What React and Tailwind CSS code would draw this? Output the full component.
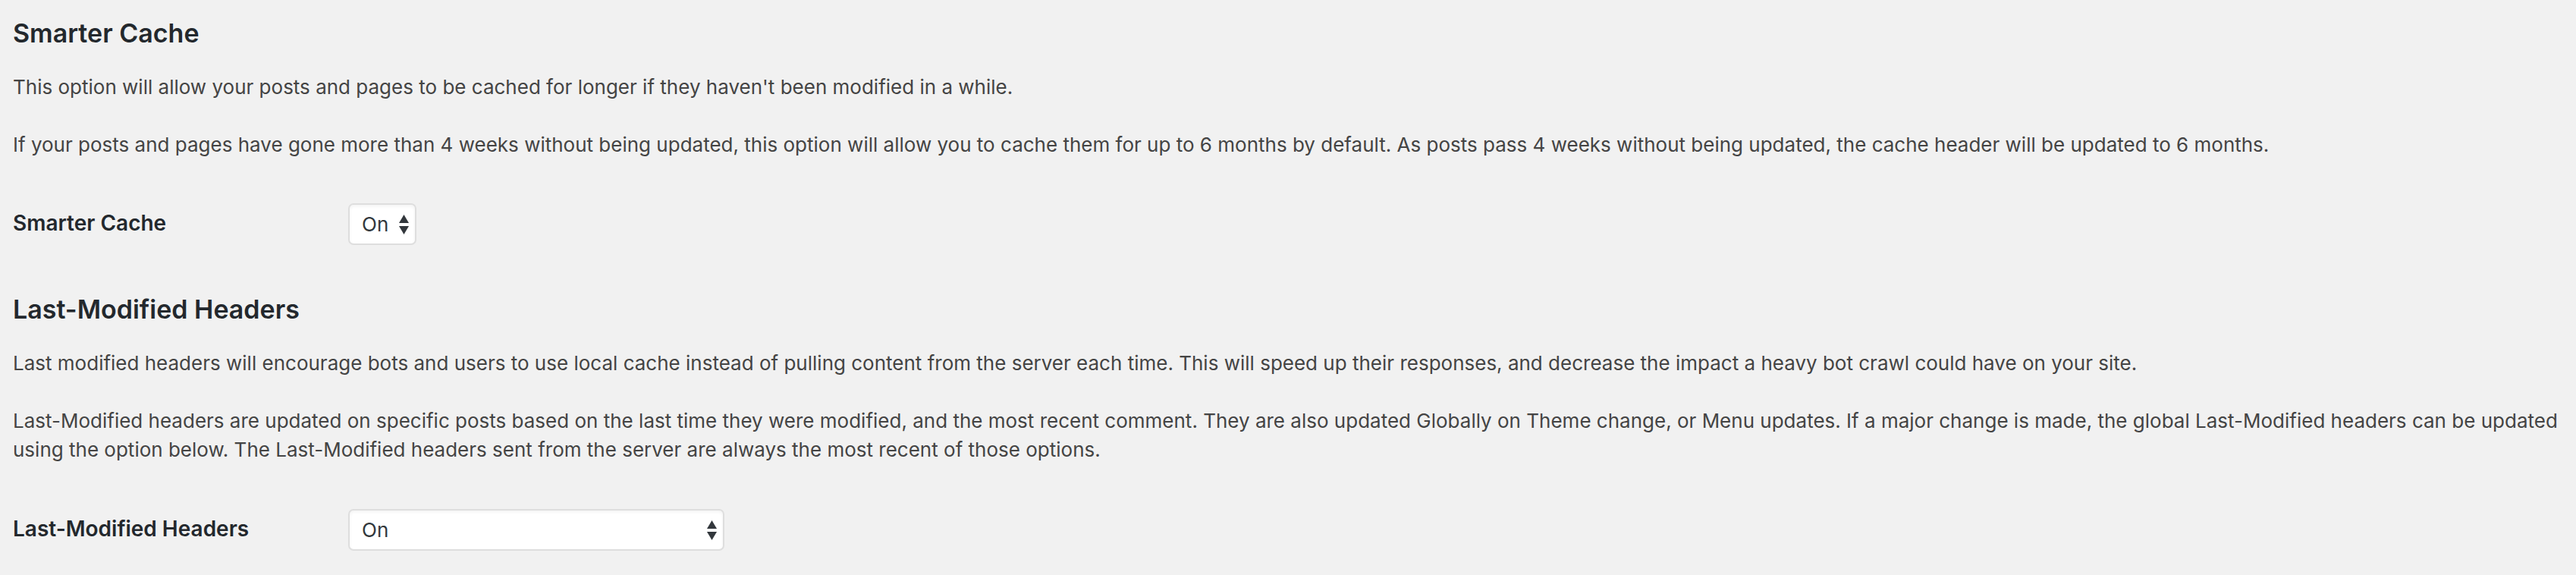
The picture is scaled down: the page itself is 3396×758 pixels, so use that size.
import { useState } from 'react';

const SelectArrows = () => (
  <svg className="pointer-events-none absolute right-[10px] top-1/2 -translate-y-1/2" width="13" height="26" viewBox="0 0 13 26">
    <path d="M6.5 0 L13 11 L0 11 Z" fill="#32373c" />
    <path d="M0 15 L13 15 L6.5 26 Z" fill="#32373c" />
  </svg>
);

const OptionSelect = ({ value, onChange, width }) => (
  <div className={`relative h-[55px] ${width}`}>
    <select
      value={value}
      onChange={(e) => onChange(e.target.value)}
      className="h-full w-full appearance-none rounded-[7px] border-2 border-[#dedede] bg-white pl-[16px] pr-[30px] text-[26px] leading-none text-[#32373c] shadow-[inset_0_2px_4px_rgba(0,0,0,0.05)] outline-none"
    >
      <option value="on">On</option>
      <option value="off">Off</option>
    </select>
    <SelectArrows />
  </div>
);

const SettingRow = ({ label, value, onChange, width }) => (
  <div className="flex items-start">
    <label className="mt-[7px] w-[442px] shrink-0 text-[28px] font-semibold leading-[38px] text-[#23282d]">{label}</label>
    <OptionSelect value={value} onChange={onChange} width={width} />
  </div>
);

export default function App() {
  const [smarterCache, setSmarterCache] = useState('on');
  const [lastModified, setLastModified] = useState('on');

  return (
    <div className="min-h-screen bg-[#f1f1f1] pl-[17px] pr-[20px] font-['Inter',sans-serif]">
      <h2 className="pt-[24px] text-[34px] font-semibold leading-[40px] text-[#23282d]">Smarter Cache</h2>
      <p className="mt-[32px] text-[26px] leading-[38px] text-[#444]">
        This option will allow your posts and pages to be cached for longer if they haven't been modified in a while.
        <br />
        <br />
        If your posts and pages have gone more than 4 weeks without being updated, this option will allow you to cache them for up to 6 months by default. As posts pass 4 weeks without being updated, the cache header will be updated to 6 months.
      </p>
      <div className="mt-[58px]">
        <SettingRow label="Smarter Cache" value={smarterCache} onChange={setSmarterCache} width="w-[90px]" />
      </div>

      <h2 className="mt-[65px] text-[34px] font-semibold leading-[40px] text-[#23282d]">Last-Modified Headers</h2>
      <p className="mt-[32px] text-[26px] leading-[38px] text-[#444]">
        Last modified headers will encourage bots and users to use local cache instead of pulling content from the server each time. This will speed up their responses, and decrease the impact a heavy bot crawl could have on your site.
        <br />
        <br />
        Last-Modified headers are updated on specific posts based on the last time they were modified, and the most recent comment. They are also updated Globally on Theme change, or Menu updates. If a major change is made, the global Last-Modified headers can be updated using the option below. The Last-Modified headers sent from the server are always the most recent of those options.
      </p>
      <div className="mt-[59px]">
        <SettingRow label="Last-Modified Headers" value={lastModified} onChange={setLastModified} width="w-[496px]" />
      </div>
    </div>
  );
}
